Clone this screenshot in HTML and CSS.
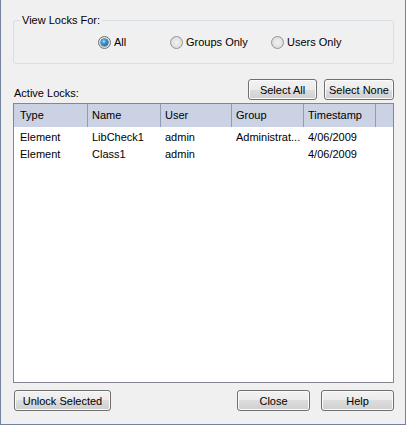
FILE: index.html
```html
<!DOCTYPE html>
<html lang="en">

<head>
    <meta charset="UTF-8">
    <meta name="viewport" content="width=device-width, initial-scale=1.0">
    <title>Manage Locks</title>
    <link rel="stylesheet" href="styles.css">
</head>

<body>
    <div class="dialog">
        <fieldset class="view-for">
            <legend>View Locks For:</legend>
            <div class="radios">
                <label class="option opt-all"><span class="radio checked"></span>All</label>
                <label class="option opt-groups"><span class="radio"></span>Groups Only</label>
                <label class="option"><span class="radio"></span>Users Only</label>
            </div>
        </fieldset>

        <div class="list-bar">
            <span class="list-title">Active Locks:</span>
            <div class="list-actions">
                <button class="btn btn-select-all">Select All</button>
                <button class="btn btn-select-none">Select None</button>
            </div>
        </div>

        <div class="locks">
            <div class="locks-row locks-head">
                <div class="cell">Type</div>
                <div class="cell">Name</div>
                <div class="cell">User</div>
                <div class="cell">Group</div>
                <div class="cell">Timestamp</div>
                <div class="cell"></div>
            </div>
            <div class="locks-body">
                <div class="locks-row">
                    <div class="cell">Element</div>
                    <div class="cell">LibCheck1</div>
                    <div class="cell">admin</div>
                    <div class="cell">Administrat...</div>
                    <div class="cell">4/06/2009</div>
                    <div class="cell"></div>
                </div>
                <div class="locks-row">
                    <div class="cell">Element</div>
                    <div class="cell">Class1</div>
                    <div class="cell">admin</div>
                    <div class="cell"></div>
                    <div class="cell">4/06/2009</div>
                    <div class="cell"></div>
                </div>
            </div>
        </div>

        <div class="footer">
            <button class="btn btn-unlock">Unlock Selected</button>
            <div class="footer-right">
                <button class="btn btn-small">Close</button>
                <button class="btn btn-small">Help</button>
            </div>
        </div>
    </div>
</body>

</html>
```

FILE: styles.css
```css
* {
    box-sizing: border-box;
}

body {
    margin: 0;
    padding: 0;
    font-family: "Liberation Sans", Arial, sans-serif;
    font-size: 11px;
    color: #000;
    background-color: #f0f0f0;
}

.dialog {
    width: 406px;
    height: 425px;
    padding: 14px 11px 13px 12px;
    border-left: 1px solid #73839b;
    border-right: 1px solid #73839b;
    border-bottom: 1px solid #73839b;
    background-color: #f0f0f0;
    display: flex;
    flex-direction: column;
}

/* group box */
.view-for {
    margin: 0;
    padding: 0;
    height: 50px;
    border: 1px solid #d5dfe5;
    border-radius: 3px;
}

.view-for legend {
    margin-left: 6px;
    padding: 0 2px;
    line-height: 13px;
}

.radios {
    display: flex;
    align-items: center;
    padding-top: 9px;
    padding-left: 84px;
}

.option {
    display: flex;
    align-items: center;
    gap: 3px;
    line-height: 13px;
}

.opt-all {
    width: 72px;
}

.opt-groups {
    width: 101px;
}

.radio {
    position: relative;
    width: 13px;
    height: 13px;
    border-radius: 50%;
    border: 1px solid #959595;
    background: radial-gradient(circle at 50% 50%, #f2f2f2 0%, #e2e2e2 55%, #d2d2d2 100%);
}

.radio.checked {
    border-color: #6b7480;
}

.radio.checked::after {
    content: "";
    position: absolute;
    left: 2px;
    top: 2px;
    width: 7px;
    height: 7px;
    border-radius: 50%;
    background: radial-gradient(circle at 40% 35%, #a8e4fb 0%, #2f8fd0 40%, #165a8e 100%);
    box-shadow: 0 0 0 0.5px #1f4c72;
}

/* list header bar */
.list-bar {
    margin-top: 15px;
    display: flex;
    justify-content: space-between;
    align-items: flex-end;
}

.list-title {
    line-height: 13px;
    margin-left: 1px;
    margin-bottom: 0;
}

.list-actions {
    display: flex;
    gap: 7px;
}

.btn {
    height: 21px;
    padding: 0;
    font-family: inherit;
    font-size: inherit;
    color: #000;
    border: 1px solid #707070;
    border-radius: 3px;
    background: linear-gradient(#f2f2f2 0%, #ebebeb 50%, #dddddd 50%, #cfcfcf 100%);
    box-shadow: inset 0 0 0 1px #fbfbfb;
    cursor: pointer;
}

.btn-select-all {
    width: 69px;
}

.btn-select-none {
    width: 70px;
}

/* locks list */
.locks {
    margin-top: 3px;
    height: 280px;
    border: 1px solid #828790;
    background-color: #fff;
}

.locks-row {
    display: grid;
    grid-template-columns: 74px 73px 71px 72px 72px 1fr;
}

.locks-head {
    height: 23px;
    background-color: #cad2e3;
}

.locks-head .cell {
    line-height: 23px;
    border-right: 1px solid #8f9cb6;
}

.locks-head .cell:last-child {
    border-right: none;
}

.locks-body {
    padding-top: 2px;
}

.locks-body .locks-row {
    height: 17px;
}

.cell {
    padding-left: 4px;
    line-height: 17px;
    white-space: nowrap;
    overflow: hidden;
}

.cell:first-child {
    padding-left: 6px;
}

/* bottom buttons */
.footer {
    margin-top: 7px;
    display: flex;
    justify-content: space-between;
}

.btn-unlock {
    width: 97px;
    margin-left: 1px;
}

.footer-right {
    display: flex;
    gap: 11px;
}

.btn-small {
    width: 73px;
}
```
